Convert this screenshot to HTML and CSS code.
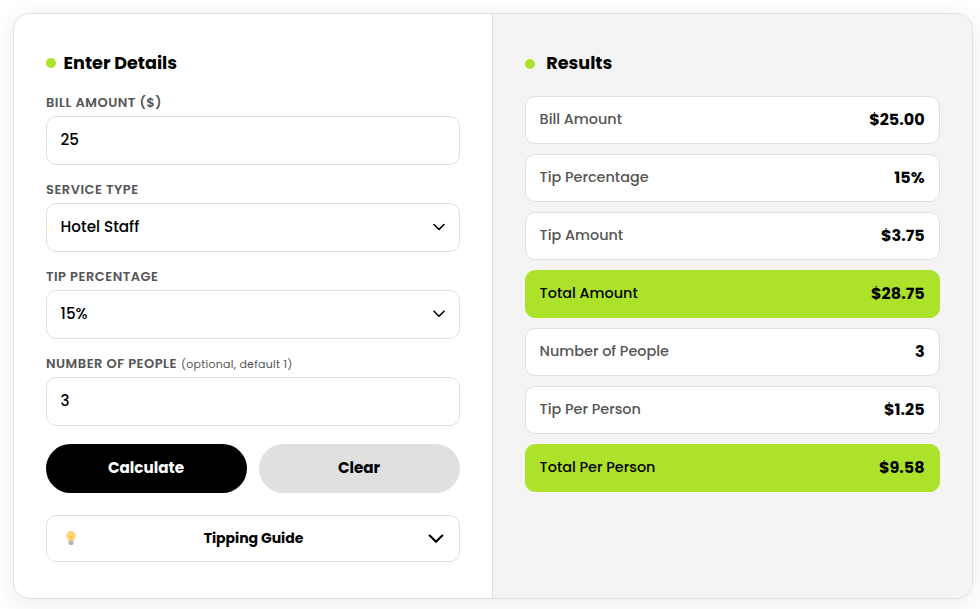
FILE: index.html
```html
<!DOCTYPE html>
<html lang="en">
<head>
    <meta charset="UTF-8">
    <meta name="viewport" content="width=device-width, initial-scale=1.0">
    <title>Tip Calculator</title>
    <link rel="stylesheet" href="styles.css">
</head>
<body>
    <div class="calculator">
        <!-- Form -->
        <form class="panel details" id="tipForm">
            <h2 class="panel-title"><span class="dot"></span><span class="title-text">Enter Details</span></h2>

            <div class="form-group">
                <label for="bill">BILL AMOUNT ($)</label>
                <input type="text" id="bill" class="field" value="25">
            </div>

            <div class="form-group">
                <label for="service">SERVICE TYPE</label>
                <div class="select-wrap">
                    <select id="service" class="field">
                        <option>Hotel Staff</option>
                    </select>
                    <svg class="select-arrow" viewBox="0 0 12 8"><path d="M1 1.5 L6 6.5 L11 1.5"/></svg>
                </div>
            </div>

            <div class="form-group">
                <label for="tip">TIP PERCENTAGE</label>
                <div class="select-wrap">
                    <select id="tip" class="field">
                        <option>15%</option>
                    </select>
                    <svg class="select-arrow" viewBox="0 0 12 8"><path d="M1 1.2 L6 6.2 L11 1.2"/></svg>
                </div>
            </div>

            <div class="form-group">
                <label for="people">NUMBER OF PEOPLE<span class="hint">(optional, default 1)</span></label>
                <input type="text" id="people" class="field" value="3">
            </div>

            <div class="buttons">
                <button type="button" class="btn btn-calculate">Calculate</button>
                <button type="button" class="btn btn-clear">Clear</button>
            </div>

            <button type="button" class="guide">
                <svg class="bulb" viewBox="0 0 12 16">
                    <path class="bulb-glass" d="M6 1a4.8 4.8 0 0 0-4.8 4.8c0 2 1.6 2.9 2.1 5.2h5.4c.5-2.3 2.1-3.2 2.1-5.2A4.8 4.8 0 0 0 6 1z"/>
                    <path class="bulb-wire" d="M4.5 6l1 1 .5-1 .5 1 1-1M6 7v4"/>
                    <path class="bulb-base" d="M3.5 11h5v3l-1 1h-3l-1-1z"/>
                </svg>
                <span class="guide-text">Tipping Guide</span>
                <svg class="guide-arrow" viewBox="0 0 16 10"><path d="M1.7 1.5 L8 7.8 L14.3 1.5"/></svg>
            </button>
        </form>

        <!-- Results -->
        <div class="panel results">
            <h2 class="panel-title results-title"><span class="dot"></span><span class="title-text">Results</span></h2>
            <div class="result-list">
                <div class="result-row"><span class="result-label">Bill Amount</span><span class="result-value">$25.00</span></div>
                <div class="result-row"><span class="result-label">Tip Percentage</span><span class="result-value">15%</span></div>
                <div class="result-row"><span class="result-label">Tip Amount</span><span class="result-value">$3.75</span></div>
                <div class="result-row highlight"><span class="result-label">Total Amount</span><span class="result-value">$28.75</span></div>
                <div class="result-row"><span class="result-label">Number of People</span><span class="result-value">3</span></div>
                <div class="result-row"><span class="result-label">Tip Per Person</span><span class="result-value">$1.25</span></div>
                <div class="result-row highlight"><span class="result-label">Total Per Person</span><span class="result-value">$9.58</span></div>
            </div>
        </div>
    </div>
</body>
</html>
```
FILE: styles.css
```css
* {
    margin: 0;
    padding: 0;
    box-sizing: border-box;
    font-family: 'Poppins', 'Inter', sans-serif;
}

body {
    background: #fff;
    padding: 13px 7px 0 13px;
    height: 609px;
    overflow: hidden;
}

.calculator {
    display: grid;
    grid-template-columns: 1fr 1fr;
    height: 586px;
    background: #fff;
    border: 1px solid #e0e0e0;
    border-radius: 16px;
    box-shadow: 0 4px 24px rgba(0, 0, 0, 0.08);
    overflow: hidden;
}

.panel {
    padding: 32px;
}

.details {
    border-right: 1px solid #e0e0e0;
}

.results {
    background: #f4f4f4;
}

.panel-title {
    display: flex;
    align-items: center;
    gap: 7.6px;
    height: 34px;
    margin-bottom: 16px;
    font-size: 1.1rem;
    font-weight: 700;
    color: #000;
}

.results-title {
    gap: 11.2px;
}

.dot {
    width: 10px;
    height: 10px;
    border-radius: 50%;
    background: #ade22b;
}

.results-title .dot {
    margin-top: 2px;
}

.form-group {
    margin-bottom: 18px;
}

.form-group label {
    display: flex;
    align-items: center;
    height: 13px;
    margin-bottom: 7px;
    font-size: 13px;
    font-weight: 600;
    letter-spacing: 0.5px;
    white-space: nowrap;
    color: #555;
}

.hint {
    margin-left: 4px;
    padding-top: 2px;
    font-size: 11px;
    font-weight: 400;
    letter-spacing: 0.26px;
}

.field {
    display: block;
    width: 100%;
    height: 49px;
    padding: 0 13.6px 2px;
    border: 1px solid #e0e0e0;
    border-radius: 10px;
    background: #fff;
    color: #000;
    font-size: 0.95rem;
    font-weight: 500;
    outline: none;
    appearance: none;
}

.select-wrap {
    position: relative;
}

.select-arrow {
    position: absolute;
    top: 20px;
    right: 15px;
    width: 12px;
    height: 8px;
}

.select-arrow path,
.guide-arrow path {
    fill: none;
    stroke: #000;
    stroke-width: 1.6;
    stroke-linecap: round;
    stroke-linejoin: round;
}

.buttons {
    display: flex;
    gap: 12px;
}

.btn {
    flex: 1;
    height: 49px;
    padding: 0 1px 2px 0;
    border: none;
    border-radius: 25px;
    font-size: 0.95rem;
    font-weight: 700;
    cursor: pointer;
}

.btn-calculate {
    background: #000;
    color: #fff;
}

.btn-clear {
    background: #e0e0e0;
    color: #000;
}

.guide {
    display: flex;
    align-items: center;
    justify-content: space-between;
    width: 100%;
    height: 47px;
    margin-top: 22px;
    padding: 0 15px 0 18px;
    border: 1px solid #e0e0e0;
    border-radius: 10px;
    background: #fff;
    color: #000;
    cursor: pointer;
}

.guide-text {
    padding-left: 2px;
    font-size: 0.88rem;
    font-weight: 700;
    letter-spacing: -0.06px;
}

.bulb {
    width: 12px;
    height: 16px;
    margin-bottom: 2px;
}

.bulb-glass {
    fill: #ffd576;
}

.bulb-wire {
    fill: none;
    stroke: #f5b04c;
    stroke-width: 0.7;
}

.bulb-base {
    fill: #b5b9bd;
}

.guide-arrow {
    width: 16px;
    height: 10px;
}

.guide-arrow path {
    stroke-width: 2.1;
}

.result-list {
    display: flex;
    flex-direction: column;
    gap: 10px;
}

.result-row {
    display: flex;
    align-items: center;
    justify-content: space-between;
    height: 48px;
    padding: 0 14.4px 2px 13.6px;
    border: 1px solid #e0e0e0;
    border-radius: 10px;
    background: #fff;
}

.result-label {
    font-size: 0.9rem;
    font-weight: 500;
    color: #555;
}

.result-value {
    font-size: 1rem;
    font-weight: 700;
    color: #000;
}

.highlight {
    background: #ade22b;
    border-color: #ade22b;
}

.highlight .result-label {
    color: #000;
}
```
